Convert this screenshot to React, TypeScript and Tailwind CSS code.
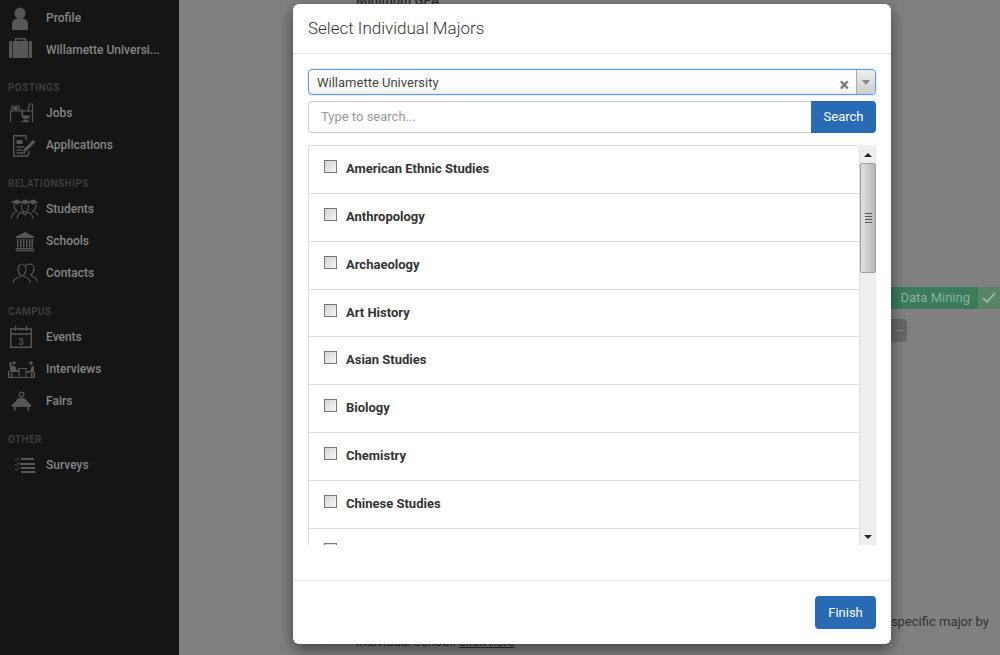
import { ReactNode } from "react";

const majors = [
  "American Ethnic Studies",
  "Anthropology",
  "Archaeology",
  "Art History",
  "Asian Studies",
  "Biology",
  "Chemistry",
  "Chinese Studies",
  "Classical Studies",
];

const ProfileIcon = () => (
  <svg width="32" height="24" viewBox="0 0 32 24" fill="#565656">
    <ellipse cx="14" cy="7.500" rx="5.500" ry="6" />
    <path d="M6 23v-5c0-3 2-5 5-5h6c3 0 5 2 5 5v5c0 .6-.4 1-1 1H7c-.6 0-1-.4-1-1z" />
  </svg>
);

const BriefcaseIcon = () => (
  <svg width="32" height="24" viewBox="0 0 32 24" fill="#565656">
    <path d="M9 3V0h11v3h-1.500V1.500h-8V3z" />
    <rect x="3" y="3" width="3" height="17" rx="1" />
    <rect x="6.700" y="3" width="15.600" height="17" />
    <rect x="23" y="3" width="3" height="17" rx="1" />
  </svg>
);

const JobsIcon = () => (
  <svg width="32" height="24" viewBox="0 0 32 24" fill="none" stroke="#565656" strokeWidth="1.200">
    <path d="M4.500 21V10h22v11" />
    <path d="M6 10V5h7v5" />
    <rect x="7.500" y="6" width="4" height="3" fill="#565656" stroke="none" />
    <path d="M22 10l1.500-7h3v7" />
    <path d="M16 8v7h7v2h-6zM19.500 17v2M15.500 21l4-2 4 2" fill="#565656" />
  </svg>
);

const ApplicationsIcon = () => (
  <svg width="32" height="24" viewBox="0 0 32 24" fill="none" stroke="#565656" strokeWidth="1.400">
    <path d="M20 7V2.700H7.700V23h14l2-5" />
    <rect x="10.500" y="7" width="6" height="4" fill="#565656" stroke="none" />
    <path d="M10.500 14h8M10.500 17h6M10.500 20h9" />
    <path d="M18 16l9-9 2.500 2-9 9-3.500 1z" fill="#565656" stroke="none" />
  </svg>
);

const StudentsIcon = () => (
  <svg width="32" height="24" viewBox="0 0 32 24" fill="none" stroke="#565656" strokeWidth="1.100">
    <path d="M6 5l5-2 4 2-4 2zM15 5l4-2 4 2-4 2zM23 5l4-2 4 2-4 2z" fill="#565656" />
    <path d="M8 7c0 4 1 6 3 6M30 7c0 4-1 6-3 6M15.500 7c0 5 1.500 8 3.500 8s3.500-3 3.500-8" />
    <path d="M5 22c.5-5 3-7 7-8M33 22c-.5-5-3-7-7-8M11 22c.5-4 2-6 5-7l3 3 3-3c3 1 4.500 3 5 7" />
  </svg>
);

const SchoolsIcon = () => (
  <svg width="32" height="24" viewBox="0 0 32 24" fill="#565656">
    <path d="M19 3l9 4.500V9H10V7.500z" />
    <path d="M11 10h1.500v8.500H11zM14 10h1.500v8.500H14zM17 10h1.500v8.500H17zM20 10h1.500v8.500H20zM23 10h1.500v8.500H23zM25.500 10H27v8.500h-1.500z" />
    <rect x="10" y="19" width="18" height="1.300" />
    <rect x="9.500" y="21" width="19" height="1.300" />
  </svg>
);

const ContactsIcon = () => (
  <svg width="32" height="24" viewBox="0 0 32 24" fill="none" stroke="#565656" strokeWidth="1.200">
    <path d="M12 8c0-3 2-5 4-5s4 2 4 5-2 7-4 7-4-4-4-7z" />
    <path d="M20 4.500c1-1 2-1.500 3.500-1.500 2.500 0 4.500 2 4.500 4.500 0 3-2 6-4 6.500" />
    <path d="M7 22c.5-4 4-5.500 7.500-6.500M17.500 15.500c3.500 1 6.500 2.500 7 6.500M25 14.500c3 1 5.500 2.500 6 6" />
  </svg>
);

const EventsIcon = () => (
  <svg width="32" height="24" viewBox="0 0 32 24" fill="none" stroke="#565656" strokeWidth="1.400">
    <path d="M4.700 4h20.600v18.300H4.700zM4.700 9h20.600" />
    <path d="M9.500 1v5M20.500 1v5M13 4h4" />
    <text x="12.500" y="19.500" fontSize="9" fontWeight="700" fontFamily="Roboto, sans-serif" fill="#565656" stroke="none">3</text>
  </svg>
);

const InterviewsIcon = () => (
  <svg width="32" height="24" viewBox="0 0 32 24" fill="#565656">
    <circle cx="8" cy="6" r="1.800" />
    <circle cx="25" cy="6" r="1.800" />
    <path d="M3 5l1.500 10H10l4 0v-1.500h-3L9 9H6L5 5zM28 9h-2l-2 5h-4v1.500h8z" />
    <path d="M2 14h1.500v6H2zM27.500 15H29v5h-1.500zM5 16h1.500v4H5zM25 16h1.500v4H25z" />
    <path d="M12 11h9v1h-9zM12.500 12h1v8h-1zM19.500 12h1v8h-1z" />
    <rect x="2" y="20" width="27" height="1" />
  </svg>
);

const FairsIcon = () => (
  <svg width="32" height="24" viewBox="0 0 32 24" fill="#565656">
    <circle cx="15.500" cy="5.500" r="2.300" fill="none" stroke="#565656" strokeWidth="1.200" />
    <path d="M10 13c0-3 2-4 5.500-4s5.500 1 5.500 4z" />
    <path d="M8 13h15v2h2v3h-2v4h-1.500v-4h-12v4H8v-4H6v-3h2z" />
  </svg>
);

const SurveysIcon = () => (
  <svg width="32" height="24" viewBox="0 0 32 24" fill="none" stroke="#565656">
    <path d="M15 6h13M14 11h15M15 15h14M15 19h14.500" strokeWidth="2" />
    <path d="M9 6l1.300 1.300L13 4.500M9 11l1.300 1.300L13 9.500M9 16l1.300 1.300L13 14.500" strokeWidth="1" />
  </svg>
);

function NavRow({ icon, label }: { icon: ReactNode; label: string }) {
  return (
    <div className="flex h-8 items-center gap-2 px-[6px]">
      <div className="flex w-8 justify-center">{icon}</div>
      <span className="truncate text-[12px] font-medium text-[#858585]">{label}</span>
    </div>
  );
}

function NavLabel({ label }: { label: string }) {
  return (
    <div className="flex h-8 items-end pb-[2px] pl-2 text-[10px] font-bold tracking-[0.4px] text-[#3c3c3c]">
      {label}
    </div>
  );
}

function Sidebar() {
  return (
    <aside className="h-full w-[179px] shrink-0 bg-[#151515] pt-[2px]">
      <div className="-mb-px">
        <NavRow icon={<ProfileIcon />} label="Profile" />
        <NavRow icon={<BriefcaseIcon />} label="Willamette Universi..." />
      </div>
      <NavLabel label="POSTINGS" />
      <NavRow icon={<JobsIcon />} label="Jobs" />
      <NavRow icon={<ApplicationsIcon />} label="Applications" />
      <NavLabel label="RELATIONSHIPS" />
      <NavRow icon={<StudentsIcon />} label="Students" />
      <NavRow icon={<SchoolsIcon />} label="Schools" />
      <NavRow icon={<ContactsIcon />} label="Contacts" />
      <NavLabel label="CAMPUS" />
      <NavRow icon={<EventsIcon />} label="Events" />
      <NavRow icon={<InterviewsIcon />} label="Interviews" />
      <NavRow icon={<FairsIcon />} label="Fairs" />
      <NavLabel label="OTHER" />
      <NavRow icon={<SurveysIcon />} label="Surveys" />
    </aside>
  );
}

// page behind the modal, only the edges of it show
function Background() {
  return (
    <main className="h-full min-w-0 flex-1 overflow-hidden bg-[#808080]">
      <div className="ml-[146px] flex h-full flex-col border-l border-[#787878] pl-[30px] text-[#333333]">
        <div className="-mt-[8px] text-[13px] font-bold leading-[18px]">Minimum GPA</div>
        <div className="mt-[277px] flex h-[22px] justify-end">
          <div className="flex w-[109px] items-center">
            <div className="flex h-[22px] flex-1 items-center justify-end bg-[#3a7c5b] pr-2 text-[13px] text-[#8fae9f]">
              Data Mining
            </div>
            <div className="flex h-[22px] w-[22px] items-center justify-center bg-[#5a8469]">
              <svg width="16" height="14" viewBox="0 0 16 14" fill="none" stroke="#9bb8a8" strokeWidth="1.800">
                <path d="M2 7l4 4 8-9" />
              </svg>
            </div>
          </div>
        </div>
        <div className="mt-[10px] flex justify-end pr-[93px]">
          <div className="flex h-[23px] w-[17px] items-center justify-end rounded-r bg-[#676767] pr-1">
            <div className="h-px w-[7px] bg-[#8a8a8a]" />
          </div>
        </div>
        <div className="mt-[270px] flex justify-end pr-[11px] text-[13px] leading-[20px]">specific major by</div>
        <div className="text-[13px] leading-[20px]">
          individual school: <span className="underline">click here</span>
        </div>
      </div>
    </main>
  );
}

function Checkbox() {
  return (
    <div className="h-[13px] w-[13px] shrink-0 border border-[#777777] bg-gradient-to-br from-[#d4d4d4] to-[#f6f6f6]" />
  );
}

function Scrollbar() {
  return (
    <div className="flex w-[16px] shrink-0 flex-col bg-[#eeeeee] pt-px">
      <div className="flex h-[17px] items-center justify-center">
        <div className="h-0 w-0 border-x-[4px] border-b-[4px] border-x-transparent border-b-[#222222]" />
      </div>
      <div className="flex h-[110px] flex-col items-center justify-center gap-[2px] rounded-[2px] border border-[#a0a0a0] bg-gradient-to-r from-[#e0e0e0] via-[#cccccc] to-[#b8b8b8]">
        <div className="h-px w-[7px] bg-[#555555]" />
        <div className="h-px w-[7px] bg-[#555555]" />
        <div className="h-px w-[7px] bg-[#555555]" />
        <div className="h-px w-[7px] bg-[#555555]" />
      </div>
      <div className="flex-1" />
      <div className="flex h-[17px] items-center justify-center">
        <div className="h-0 w-0 border-x-[4px] border-t-[4px] border-x-transparent border-t-[#222222]" />
      </div>
    </div>
  );
}

function MajorsModal() {
  return (
    <div className="absolute left-[293px] top-[4px] flex h-[640px] w-[598px] flex-col rounded-md bg-white shadow-[0_5px_15px_rgba(0,0,0,0.5)]">
      <div className="flex h-[50px] shrink-0 items-center border-b border-[#e5e5e5] px-[15px] text-[17px] font-light text-[#333333]">
        Select Individual Majors
      </div>
      <div className="flex min-h-0 flex-1 flex-col px-[15px] pt-[15px]">
        <div className="flex h-[26px] shrink-0 items-center rounded border border-[#5897fb] bg-gradient-to-b from-white from-60% to-[#eeeeee] shadow-[0_0_2px_rgba(88,151,251,0.5)]">
          <span className="flex-1 pl-2 pt-px text-[13px] text-[#444444]">Willamette University</span>
          <span className="pr-[7px] pt-[5px] text-[18px] font-bold leading-none text-[#777777]">×</span>
          <div className="flex h-full w-[19px] items-center justify-center rounded-r border-l border-[#aaaaaa] bg-gradient-to-b from-[#eeeeee] to-[#cccccc]">
            <div className="h-0 w-0 border-x-[4px] border-t-[5px] border-x-transparent border-t-[#888888]" />
          </div>
        </div>
        <div className="mt-[6px] flex h-[32px] shrink-0">
          <div className="flex flex-1 items-center rounded-l border border-r-0 border-[#cccccc] pl-3 text-[13px] text-[#999999]">
            Type to search...
          </div>
          <div className="flex w-[65px] items-center justify-center rounded-r bg-[#286ab3] text-[13px] text-white">
            Search
          </div>
        </div>
        <div className="mt-[12px] flex h-[400px] shrink-0">
          <div className="min-w-0 flex-1 overflow-hidden rounded-tr border-x border-t border-[#dddddd]">
            {majors.map((major) => (
              <div key={major} className="flex h-[47.86px] gap-[9px] border-b border-[#dddddd] pl-[15px] pt-[14px]">
                <Checkbox />
                <span className="pt-px text-[13px] font-bold leading-[16px] text-[#333333]">{major}</span>
              </div>
            ))}
          </div>
          <Scrollbar />
        </div>
      </div>
      <div className="flex h-[64px] shrink-0 items-center justify-end border-t border-[#e5e5e5] px-[15px]">
        <div className="flex h-[33px] w-[61px] items-center justify-center rounded bg-[#286ab3] text-[13px] text-white">
          Finish
        </div>
      </div>
    </div>
  );
}

export default function App() {
  return (
    <div className="relative flex h-[655px] w-[1000px] overflow-hidden font-['Roboto',sans-serif]">
      <Sidebar />
      <Background />
      <MajorsModal />
    </div>
  );
}
